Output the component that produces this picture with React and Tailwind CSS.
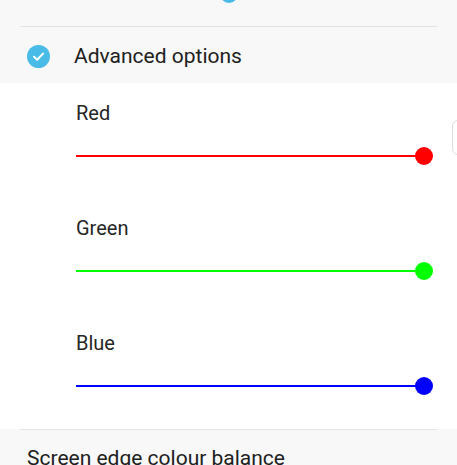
import React from "react";

function Slider({ label, color }) {
  return (
    <div className="h-[115px] flex flex-col">
      <div className="pl-[76px] h-[24px] leading-[24px] text-[20px] text-[#262626]">{label}</div>
      <div className="relative mt-[22px] h-[18px] ml-[76px] mr-[33px]">
        <div className="absolute left-0 right-0 top-[8px] h-[2px]" style={{ background: color }} />
        <div className="absolute right-[-9px] top-0 w-[18px] h-[18px] rounded-full" style={{ background: color }} />
      </div>
    </div>
  );
}

export default function App() {
  return (
    <div
      className="relative w-[457px] h-[465px] overflow-hidden bg-[#f8f8f8]"
      style={{ fontFamily: "Roboto, 'Noto Sans', sans-serif" }}
    >
      <div className="absolute left-[220px] top-[-15px] w-[18px] h-[18px] rounded-full bg-[#48bbe6]" />
      <div className="h-[83px] flex flex-col">
        <div className="h-[26px]" />
        <div className="mx-[20px] h-px bg-[#e4e4e4]" />
        <div className="flex items-center h-[56px] pt-[3px]">
          <div className="ml-[27px] w-[23px] h-[23px] rounded-full bg-[#48bbe6] flex items-center justify-center">
            <svg width="13" height="13" viewBox="0 0 13 13" fill="none">
              <path d="M2 6.8 L5.2 9.8 L11 3.6" stroke="white" strokeWidth="2" strokeLinecap="round" strokeLinejoin="round" />
            </svg>
          </div>
          <div className="ml-[24px] text-[21px] text-[#202020]">Advanced options</div>
        </div>
      </div>
      <div className="relative h-[346px] bg-white pt-[18px]">
        <Slider label="Red" color="#ff0000" />
        <Slider label="Green" color="#00ff00" />
        <Slider label="Blue" color="#0000ff" />
        <div className="absolute left-[452px] top-[37px] w-[20px] h-[35px] rounded-[6px] border border-[#dcdcdc]" />
      </div>
      <div className="mx-[20px] h-px bg-[#e4e4e4]" />
      <div className="pl-[27px] pt-[16px] text-[21px] leading-[24px] text-[#202020]">Screen edge colour balance</div>
    </div>
  );
}
